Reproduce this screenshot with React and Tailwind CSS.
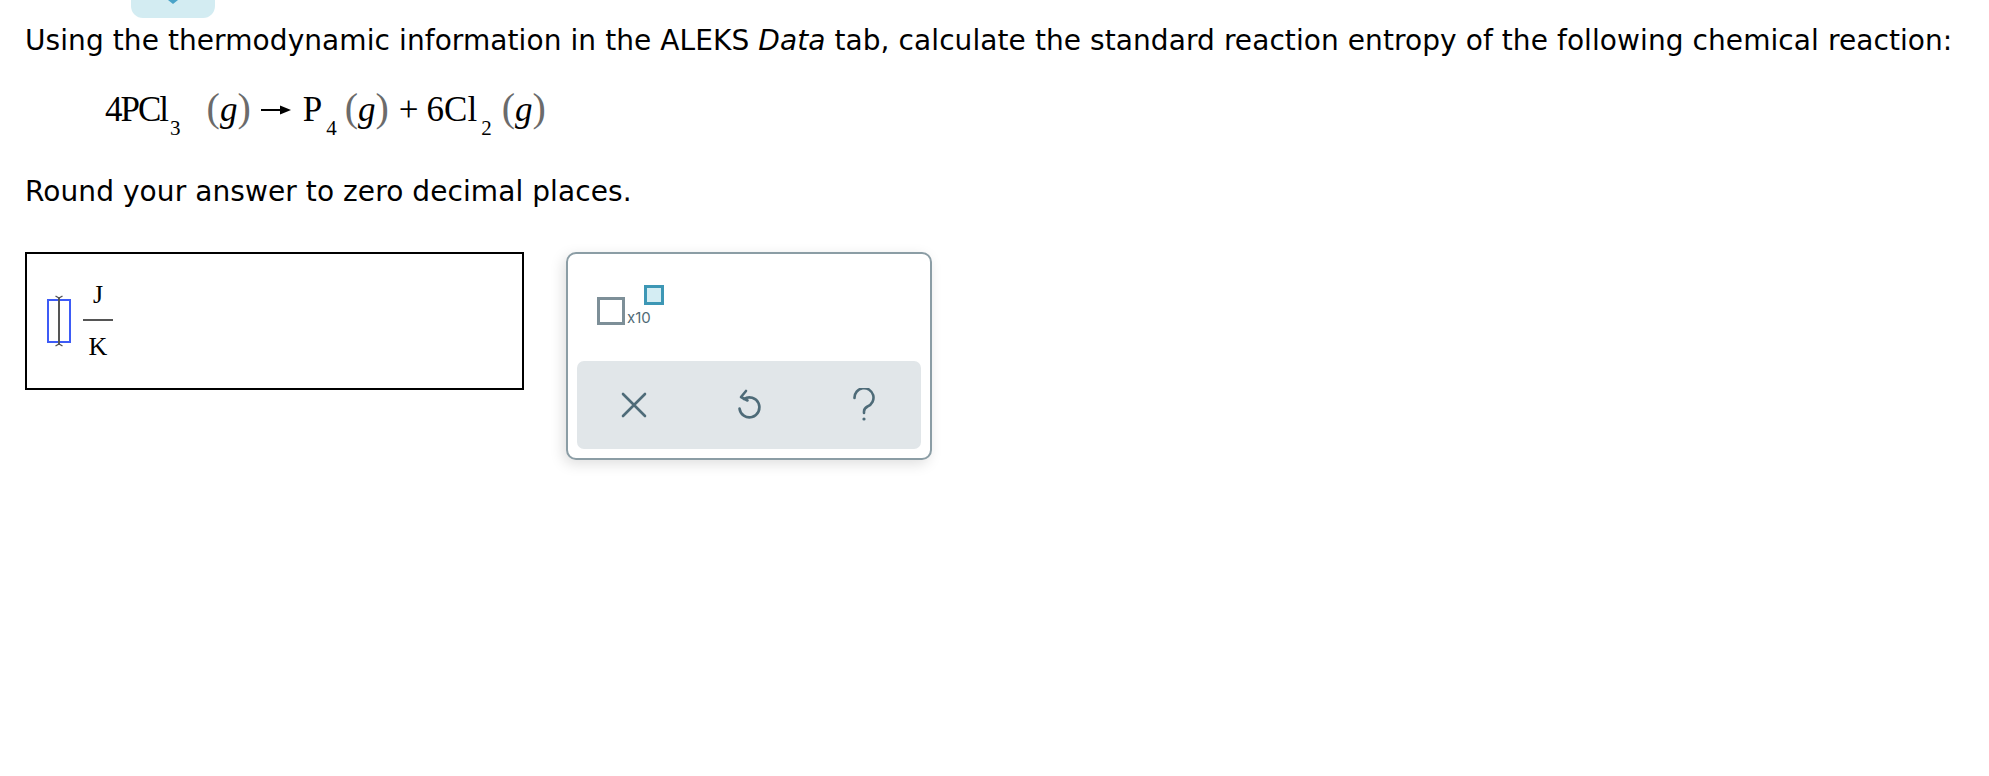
import React from 'react';

const Paren = ({ children }) => (
  <span className="text-[40px] text-[#6b6b6b]">{children}</span>
);

const Gas = ({ className = '' }) => (
  <span className={className}>
    <Paren>(</Paren>
    <span className="italic">g</span>
    <Paren>)</Paren>
  </span>
);

const Sub = ({ children, className = '' }) => (
  <span className={`text-[21px] align-[-14px] ${className}`}>{children}</span>
);

const Arrow = () => (
  <svg width="30" height="10" viewBox="0 0 30 10" className="inline-block align-[6px] ml-[10px] mr-[12px]">
    <line x1="0" y1="5" x2="22" y2="5" stroke="#000" strokeWidth="2" />
    <path d="M19 0.5 L30 5 L19 9.5 Z" fill="#000" />
  </svg>
);

const Cursor = () => (
  <svg width="24" height="52" viewBox="0 0 24 52">
    <rect x="1" y="5" width="22" height="42" fill="none" stroke="#3d5bf6" strokeWidth="2" />
    <line x1="12" y1="2" x2="12" y2="50" stroke="#555" strokeWidth="2" />
    <path d="M8.5 1 L12 3 L15.5 1 M8.5 51 L12 49 L15.5 51" fill="none" stroke="#555" strokeWidth="1.4" />
  </svg>
);

const XIcon = () => (
  <svg width="26" height="26" viewBox="0 0 26 26" fill="none" stroke="#4e6b78" strokeWidth="2.6" strokeLinecap="round">
    <path d="M2 2 L24 24 M24 2 L2 24" />
  </svg>
);

const UndoIcon = () => (
  <svg width="28" height="32" viewBox="0 0 28 32" fill="none" stroke="#4e6b78" strokeWidth="2.6" strokeLinecap="round" strokeLinejoin="round">
    <path d="M9 10 A10 10 0 1 1 4.5 19.5" />
    <path d="M11 2 L6 8 L12.5 11.5" />
  </svg>
);

const HelpIcon = () => (
  <svg width="26" height="34" viewBox="0 0 26 34" fill="none" stroke="#4e6b78" strokeWidth="2.6" strokeLinecap="round">
    <path d="M3.5 10 A9.5 9.5 0 1 1 16.5 18.5 C14 19.8 13 21 13 23.5 V25" />
    <circle cx="13" cy="31" r="1.6" fill="#4e6b78" stroke="none" />
  </svg>
);

export default function App() {
  return (
    <div className="min-h-[776px] bg-white pl-[25px] text-black">
      {/* top tab */}
      <div className="ml-[106px] w-[84px] h-[18px] bg-[#d3ecf2] rounded-b-[12px] flex justify-center">
        <svg width="10" height="4" viewBox="0 0 10 4">
          <path d="M0 0 L5 4 L10 0 Z" fill="#4aa3c8" />
        </svg>
      </div>

      <p className="mt-[6px] leading-[34px] text-[28px] tracking-[0.08px] whitespace-nowrap font-['DejaVu_Sans','Verdana',sans-serif]">
        Using the thermodynamic information in the ALEKS <i>Data</i> tab, calculate the standard reaction entropy of the following chemical reaction:
      </p>

      <div className="mt-[30px] h-[40px] pl-[80px] leading-[40px] text-[35px] font-['Liberation_Serif','Times_New_Roman',serif] whitespace-nowrap">
        <span className="tracking-[-2px]">4PCl</span>
        <Sub className="ml-[3px]">3</Sub>
        <Gas className="ml-[26px]" />
        <Arrow />
        <span>P</span>
        <Sub className="ml-[4px]">4</Sub>
        <Gas className="ml-[8px]" />
        <span className="ml-[10px]">+</span>
        <span className="ml-[8px]">6Cl</span>
        <Sub className="ml-[4px]">2</Sub>
        <Gas className="ml-[10px]" />
      </div>

      <p className="mt-[47px] leading-[34px] text-[28px] tracking-[0.08px] font-['DejaVu_Sans','Verdana',sans-serif]">
        Round your answer to zero decimal places.
      </p>

      <div className="mt-[43px] flex items-start gap-[42px]">
        {/* answer box */}
        <div className="w-[499px] h-[138px] border-2 border-black flex items-center pl-[20px] gap-[12px]">
          <Cursor />
          <div className="flex flex-col items-center font-['Liberation_Serif','Times_New_Roman',serif] text-[26px] leading-none">
            <span>J</span>
            <span className="mt-[11px] w-[30px] h-[2px] bg-[#555]" />
            <span className="mt-[13px]">K</span>
          </div>
        </div>

        {/* palette */}
        <div className="w-[366px] h-[208px] border-2 border-[#8b9da5] rounded-[10px] bg-white p-[9px] flex flex-col shadow-[-3px_4px_14px_rgba(0,0,0,0.13)]">
          <div className="h-[98px] pl-[20px] pt-[22px] flex items-start">
            <div className="mt-[12px] w-[28px] h-[28px] border-[3px] border-[#7d8f98]" />
            <span className="mt-[25px] ml-[2px] text-[15px] leading-[15px] text-[#4f6a76] font-['Inter','Open_Sans',sans-serif]">x10</span>
            <div className="ml-[-7px] w-[20px] h-[20px] border-[3px] border-[#3d97b5] bg-[#d4edf3]" />
          </div>
          <div className="h-[88px] bg-[#e1e6e9] rounded-[7px] grid grid-cols-3 items-center justify-items-center">
            <XIcon />
            <UndoIcon />
            <HelpIcon />
          </div>
        </div>
      </div>
    </div>
  );
}
